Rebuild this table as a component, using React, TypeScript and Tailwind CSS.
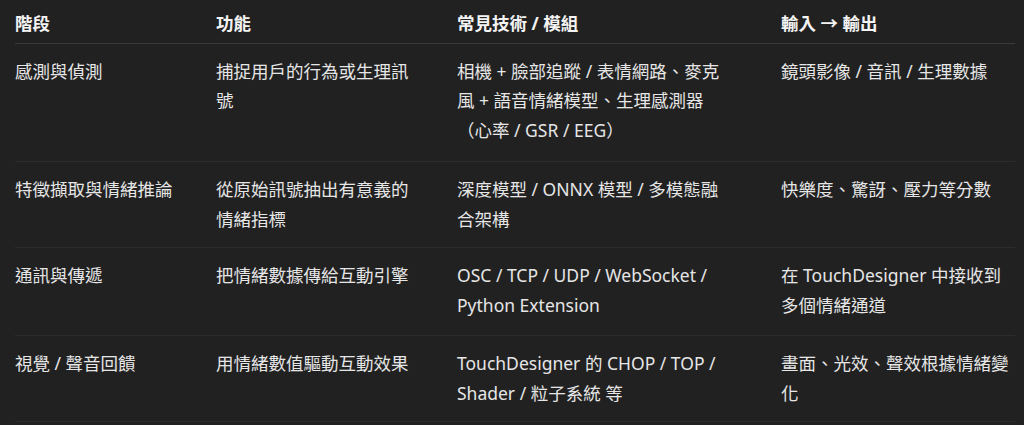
const font = {
  fontFamily: '"Noto Sans", "Noto Sans CJK TC", sans-serif',
}

type Row = { stage: string; role: string; tech: string; io: string; pad: string }

const headers = ['階段', '功能', '常見技術 / 模組', '輸入 → 輸出']

const rows: Row[] = [
  {
    stage: '感測與偵測',
    role: '捕捉用戶的行為或生理訊號',
    tech: '相機 + 臉部追蹤 / 表情網路、麥克風 + 語音情緒模型、生理感測器（心率 / GSR / EEG）',
    io: '鏡頭影像 / 音訊 / 生理數據',
    pad: 'pt-[13px] pb-[16px]',
  },
  {
    stage: '特徵擷取與情緒推論',
    role: '從原始訊號抽出有意義的情緒指標',
    tech: '深度模型 / ONNX 模型 / 多模態融合架構',
    io: '快樂度、驚訝、壓力等分數',
    pad: 'py-[13px]',
  },
  {
    stage: '通訊與傳遞',
    role: '把情緒數據傳給互動引擎',
    tech: 'OSC / TCP / UDP / WebSocket / Python Extension',
    io: '在 TouchDesigner 中接收到多個情緒通道',
    pad: 'pt-[13px] pb-[15px]',
  },
  {
    stage: '視覺 / 聲音回饋',
    role: '用情緒數值驅動互動效果',
    tech: 'TouchDesigner 的 CHOP / TOP / Shader / 粒子系統 等',
    io: '畫面、光效、聲效根據情緒變化',
    pad: 'py-[13px]',
  },
]

const cols = 'grid grid-cols-[201px_241px_324px_234px]'

export default function App() {
  return (
    <div className="w-[1024px] h-[425px] bg-[#212121] overflow-hidden" style={font}>
      <div className="ml-[15px] w-[1000px] text-[17.5px] leading-[29.5px]">
        {/* header */}
        <div className={`${cols} border-b border-[#3a3a3a] pt-[9px] pb-[4px] font-bold text-[#f3f3f3]`}>
          <div className="pr-[36px]">{headers[0]}</div>
          <div className="pr-[44px]">{headers[1]}</div>
          <div className="pr-[54px]">{headers[2]}</div>
          <div>{headers[3]}</div>
        </div>

        {rows.map((r) => (
          <div key={r.stage} className={`${cols} border-b border-[#2c2c2c] text-[#e6e6e6] ${r.pad}`}>
            <div className="pr-[36px]">{r.stage}</div>
            <div className="pr-[44px]">{r.role}</div>
            <div className="pr-[54px]">{r.tech}</div>
            <div>{r.io}</div>
          </div>
        ))}
      </div>
    </div>
  )
}
